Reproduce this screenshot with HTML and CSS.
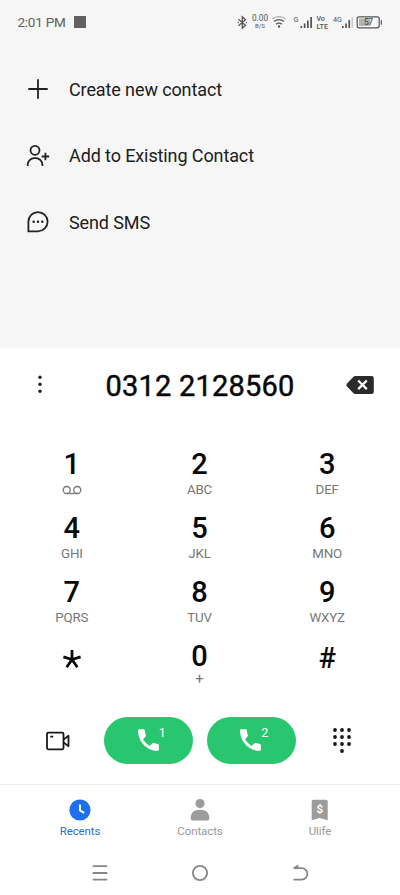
FILE: index.html
```html
<!DOCTYPE html>
<html lang="en">
<head>
<meta charset="utf-8">
<title>Phone</title>
<link rel="stylesheet" href="styles.css">
</head>
<body>
<div class="phone">
  <header class="status">
    <span class="time">2:01 PM</span>
    <span class="notice"></span>
    <svg class="indicators" width="150" height="20" viewBox="235 12 150 20" fill="none" stroke="#555">
      <path d="M238.500 19.300l7 6-3.200 3v-11.600l3.200 3-7 6M237.800 22.500h1M245.800 22.500h1" stroke-width="1.300"/>
      <g fill="#555" stroke="none">
        <text x="252" y="21.300" font-size="8.500" textLength="16" lengthAdjust="spacingAndGlyphs">0.00</text>
        <text x="255" y="27.800" font-size="6" textLength="10" lengthAdjust="spacingAndGlyphs">B/S</text>
        <text x="293.500" y="22.300" font-size="7.500">G</text>
        <text x="316.500" y="21.300" font-size="7" font-weight="500">Vo</text>
        <text x="316.500" y="28.500" font-size="7" font-weight="500" textLength="11.500" lengthAdjust="spacingAndGlyphs">LTE</text>
        <text x="333" y="22.300" font-size="8" textLength="9" lengthAdjust="spacingAndGlyphs">4G</text>
        <path d="M300.500 26h1.700v2h-1.700zM303.800 23.500h1.700v4.500h-1.700zM307 20.500h1.700v7.500h-1.700zM310.300 17h1.700v11h-1.700zM342 26h1.700v2h-1.700zM345.200 23.500h1.700v4.500h-1.700zM348.400 20h1.700v8h-1.700z"/>
        <path d="M351.700 17h1.100v11h-1.100z" opacity=".35"/>
        <circle cx="279" cy="26.500" r="1.200"/>
        <path d="M359 18.500h11v7.500h-11z" opacity=".42"/>
        <text x="364" y="25.300" font-size="8.500" font-weight="500" textLength="9">57</text>
        <path d="M380.700 20.200h1.200v4.200h-1.200z"/>
      </g>
      <path d="M276 24.300q3-2.300 6 0M274 21.500q5-3.800 10 0" stroke-width="1.100"/>
      <path d="M272.300 19q6.700-4.800 13.400 0" stroke-width="1" opacity=".55"/>
      <rect x="357.200" y="16.800" width="22" height="11" rx="2" stroke-width="1.200"/>
    </svg>
  </header>

  <nav class="actions">
    <a class="action">
      <svg width="24" height="24" viewBox="0 0 24 24" class="line"><path d="M12 2.300v19.400M2.300 12h19.400"/></svg>
      <span class="create">Create new contact</span>
    </a>
    <a class="action">
      <svg width="24" height="24" viewBox="0 0 24 24" class="line"><circle cx="9" cy="6.300" r="4.500"/><path d="M1.700 22v-1.500a6.500 6.500 0 0 1 6.500-6.300h1.700a6.500 6.500 0 0 1 6.500 6.300V22M15.700 12.500h7.500M19.400 8.800v7.400"/></svg>
      <span class="existing">Add to Existing Contact</span>
    </a>
    <a class="action">
      <svg width="24" height="24" viewBox="0 0 24 24" class="line"><path d="M2.400 21.300V11.700a9.600 9.600 0 1 1 9.600 9.600z"/><g fill="#222" stroke="none"><circle cx="7.700" cy="11.800" r="1.250"/><circle cx="12" cy="11.800" r="1.250"/><circle cx="16.300" cy="11.800" r="1.250"/></g></svg>
      <span class="sms">Send SMS</span>
    </a>
  </nav>

  <main class="dialer">
    <div class="entry">
      <svg width="8" height="24" viewBox="0 0 8 24" fill="#222"><circle cx="4" cy="4.300" r="1.700"/><circle cx="4" cy="11.300" r="1.700"/><circle cx="4" cy="18.300" r="1.700"/></svg>
      <span class="number">0312 2128560</span>
      <svg width="28" height="20" viewBox="0 0 28 20"><path d="M1 8.600L7.200 2q.9-1 2.300-1H25.500q2.300 0 2.300 2.300v13.400q0 2.300-2.300 2.300H9.500q-1.400 0-2.300-1L1 11.400q-1.200-1.400 0-2.800z" fill="#2b2b2b"/><path d="M12.200 5.500l8.600 8.600M20.800 5.500l-8.600 8.600" stroke="#fff" stroke-width="2.300"/></svg>
    </div>

    <div class="keys">
      <div class="key"><b>1</b><svg width="20" height="16" viewBox="0 0 20 16" fill="none" stroke="#777" stroke-width="1.300"><circle cx="4.700" cy="8" r="3.500"/><circle cx="15.300" cy="8" r="3.500"/><path d="M4.700 11.500h10.600"/></svg></div>
      <div class="key"><b>2</b><small>ABC</small></div>
      <div class="key"><b>3</b><small>DEF</small></div>
      <div class="key"><b>4</b><small>GHI</small></div>
      <div class="key"><b>5</b><small>JKL</small></div>
      <div class="key"><b>6</b><small>MNO</small></div>
      <div class="key"><b>7</b><small>PQRS</small></div>
      <div class="key"><b>8</b><small>TUV</small></div>
      <div class="key"><b>9</b><small>WXYZ</small></div>
      <div class="key last"><svg class="star" width="20" height="20" viewBox="0 0 20 20" stroke="#080808" stroke-width="2.800"><path d="M10 10.500V1M10 10.500L1.400 7.900M10 10.500l8.600-2.600M10 10.500L4.700 18.200M10 10.500l5.300 7.700"/></svg></div>
      <div class="key last"><b class="zero">0</b><small class="plus">+</small></div>
      <div class="key last"><b class="hash">#</b></div>
    </div>

    <div class="calls">
      <svg class="video" width="24" height="20" viewBox="0 0 24 20" fill="none" stroke="#181818" stroke-width="1.800" stroke-linejoin="round"><rect x="1" y="1.700" width="16.500" height="16.600" rx="1.200"/><path d="M17.500 8.600l5-3.800v10.400l-5-3.800M4.200 5.600h3"/></svg>
      <button class="call"><svg width="24" height="24" viewBox="0 0 24 24"><path d="M2 1.200Q1 1.200 1 2.400C1 13.500 10 22.800 20.600 22.800q1.300 0 1.300-1.200v-4.400q0-1-1-1.200l-4.400-1q-.8-.2-1.300.4l-2.500 2.500Q8.500 15.500 6 11.200l2.400-2.400q.6-.6.400-1.300L7.800 2.200Q7.600 1.200 6.600 1.200z" fill="#fff"/></svg><sup>1</sup></button>
      <button class="call"><svg width="24" height="24" viewBox="0 0 24 24"><path d="M2 1.200Q1 1.200 1 2.400C1 13.500 10 22.800 20.600 22.800q1.300 0 1.300-1.200v-4.400q0-1-1-1.200l-4.400-1q-.8-.2-1.300.4l-2.500 2.500Q8.500 15.500 6 11.200l2.400-2.400q.6-.6.400-1.300L7.800 2.200Q7.600 1.200 6.600 1.200z" fill="#fff"/></svg><sup>2</sup></button>
      <svg class="pad" width="20" height="26" viewBox="0 0 20 26" fill="#181818"><circle cx="3" cy="3" r="1.900"/><circle cx="10" cy="3" r="1.900"/><circle cx="17" cy="3" r="1.900"/><circle cx="3" cy="10" r="1.900"/><circle cx="10" cy="10" r="1.900"/><circle cx="17" cy="10" r="1.900"/><circle cx="3" cy="17" r="1.900"/><circle cx="10" cy="17" r="1.900"/><circle cx="17" cy="17" r="1.900"/><circle cx="10" cy="24" r="1.900"/></svg>
    </div>
  </main>

  <nav class="tabs">
    <a class="tab active"><svg width="24" height="24" viewBox="0 0 24 24"><circle cx="12" cy="12" r="10.600" fill="#1f6fee"/><path d="M12 6.500v6l4.200 2.400" fill="none" stroke="#fff" stroke-width="1.900"/></svg><span>Recents</span></a>
    <a class="tab"><svg width="24" height="24" viewBox="0 0 24 24" fill="#9c9c9c"><circle cx="12" cy="5.600" r="4.600"/><path d="M2.700 20.500c0-6 3.500-8.700 9.300-8.700s9.300 2.700 9.300 8.700q0 2-1.800 2h-15q-1.800 0-1.800-2z"/></svg><span>Contacts</span></a>
    <a class="tab"><svg width="24" height="24" viewBox="0 0 24 24"><path d="M3.700 3.300q0-1.600 1.600-1.600h12.800q1.600 0 1.600 1.600v18.900l-8-2.200-8 2.200z" fill="#9c9c9c"/><text x="11.700" y="14.500" text-anchor="middle" font-size="11.500" font-weight="700" fill="#fff">$</text></svg><span>Ulife</span></a>
  </nav>

  <footer class="system">
    <svg width="20" height="20" viewBox="0 0 20 20"><path d="M2.800 3.200h14.400M2.800 10h14.400M2.800 16.600h14.400"/></svg>
    <svg width="20" height="20" viewBox="0 0 20 20"><circle cx="10" cy="10" r="7.100"/></svg>
    <svg width="20" height="20" viewBox="0 0 20 20"><path d="M3.500 5.100h8.200a5.750 5.750 0 0 1 0 11.500H3.500M8.500 2.500L4.200 5.100"/></svg>
  </footer>
</div>
</body>
</html>
```
FILE: styles.css
```css
* { box-sizing: border-box; }

body {
  margin: 0;
  font-family: Roboto, "Noto Sans", sans-serif;
  background: #fff;
}

svg { display: block; flex: none; }

.phone {
  width: 400px;
  height: 895px;
  display: flex;
  flex-direction: column;
  overflow: hidden;
}

.status {
  height: 44px;
  padding: 0 15px 0 17.5px;
  display: flex;
  align-items: center;
  background: #f6f6f6;
  color: #606060;
}

.time {
  width: 49px;
  font-size: 13.500px;
  letter-spacing: -0.250px;
  white-space: nowrap;
}

.notice {
  width: 12px;
  height: 12px;
  margin-left: 7.500px;
  background: #616161;
}

.indicators { margin-left: auto; }

.actions {
  height: 304px;
  padding-top: 12px;
  background: #f6f6f6;
}

.action {
  height: 66.600px;
  padding-left: 25.500px;
  display: flex;
  align-items: center;
  gap: 19.500px;
  font-size: 18px;
  letter-spacing: -0.110px;
  color: #202020;
  white-space: nowrap;
}

.line {
  fill: none;
  stroke: #222;
  stroke-width: 1.800;
}

.dialer {
  height: 436px;
  display: flex;
  flex-direction: column;
}

.entry {
  height: 73px;
  padding: 0 26px 0 36px;
  display: flex;
  align-items: center;
  justify-content: space-between;
}

.number {
  margin-left: 10px;
  padding-top: 2px;
  font-size: 29px;
  font-weight: 400;
  -webkit-text-stroke: 0.450px #080808;
  letter-spacing: 0.200px;
  color: #080808;
}

.keys {
  margin: 24px 9px 0 8px;
  display: grid;
  grid-template-columns: repeat(3, 1fr);
  grid-auto-rows: 64px;
}

.key {
  display: flex;
  flex-direction: column;
  align-items: center;
  padding-top: 2px;
}

.key b {
  font-size: 29px;
  line-height: 34px;
  font-weight: 500;
  color: #080808;
}

.key small {
  margin-top: 1px;
  font-size: 13.300px;
  line-height: 16px;
  letter-spacing: -0.150px;
  color: #777;
}

.key svg { margin-top: 1px; }
.key.last { padding-top: 3px; }
.key .star { margin-top: 9px; }
.key .zero { line-height: 33px; }
.key .hash { padding-top: 1px; }
.key .plus { margin-top: 0; font-size: 15px; line-height: 12px; }

.calls {
  margin-top: 14px;
  padding: 0 46px;
  height: 50px;
  display: flex;
  align-items: center;
}

.call {
  width: 89px;
  height: 47px;
  margin: 0 0 0 13.500px;
  padding: 0 0 0 6px;
  border: 0;
  border-radius: 24px;
  background: #28c76f;
  color: #fff;
  display: flex;
  align-items: center;
  justify-content: center;
  font-family: inherit;
}

.video { margin-top: 1px; }
.video + .call { margin-left: 34px; }

.call sup {
  width: 8px;
  margin-left: -2.500px;
  align-self: flex-start;
  margin-top: 8.500px;
  font-size: 12.500px;
  line-height: 15px;
}

.pad { margin-left: auto; margin-right: 2px; }

.tabs {
  height: 66px;
  padding: 0 20px;
  border-top: 1px solid #ececec;
  display: grid;
  grid-template-columns: repeat(3, 1fr);
}

.tab {
  padding-top: 13px;
  display: flex;
  flex-direction: column;
  align-items: center;
  gap: 2px;
  font-size: 11.500px;
  letter-spacing: -0.100px;
  line-height: 15px;
  color: #999;
}

.tab.active { color: #2a6fd0; }

.system {
  height: 45px;
  padding: 0 20px;
  display: flex;
  align-items: center;
  justify-content: center;
  gap: 80px;
  fill: none;
  stroke: #858585;
  stroke-width: 1.800;
}
```
